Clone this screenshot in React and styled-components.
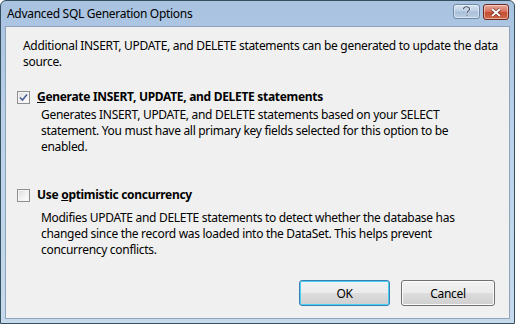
import React from 'react';
import styled, { createGlobalStyle } from 'styled-components';

const GlobalStyle = createGlobalStyle`
  html, body {
    margin: 0;
    padding: 0;
    background: #ffffff;
  }
  body {
    font-family: "Noto Sans", "Open Sans", sans-serif;
    letter-spacing: -0.3px;
  }
`;

const Window = styled.div`
  width: 515px;
  height: 324px;
  box-sizing: border-box;
  display: flex;
  flex-direction: column;
  border: 1px solid #34505f;
  border-radius: 6px 6px 0 0;
  background: linear-gradient(180deg, #a8c2e0 0%, #bcd2ea 40%, #c6d9ec 100%);
  overflow: hidden;
`;

const TitleBar = styled.div`
  height: 25px;
  flex: none;
  display: flex;
  align-items: center;
  padding: 0 5px 0 6px;
`;

const Title = styled.span`
  font-size: 12px;
  color: #000;
`;

const TitleButtons = styled.div`
  margin-left: auto;
  display: flex;
  align-items: flex-start;
  gap: 3px;
  align-self: flex-start;
  padding-top: 3px;
`;

const CaptionButton = styled.div`
  width: ${(p) => (p.$close ? 26 : 27)}px;
  height: ${(p) => (p.$close ? 16 : 15)}px;
  box-sizing: border-box;
  border: 1px solid ${(p) => (p.$close ? '#6d2a1c' : '#6f89a6')};
  border-radius: 3px;
  display: flex;
  align-items: center;
  justify-content: center;
  background: ${(p) =>
    p.$close
      ? 'linear-gradient(180deg, #e9a99c 0%, #d8735e 45%, #c44c2f 55%, #d1694c 100%)'
      : 'linear-gradient(180deg, #d8e5f2 0%, #bccfe4 45%, #a9c0da 55%, #bdd0e4 100%)'};
  box-shadow: inset 0 0 0 1px rgba(255, 255, 255, 0.45);
`;

const Client = styled.div`
  flex: 1;
  margin: 0 4px 4px;
  border: 1px solid #8ea4bb;
  background: #f0f0f0;
  display: flex;
  flex-direction: column;
  padding: 11px 10px 12px 11px;
  font-size: 12px;
  line-height: 16px;
  color: #000;
`;

const Intro = styled.p`
  margin: 0 0 0 6px;
`;

const Option = styled.div`
  margin-top: ${(p) => p.$gap}px;
  display: flex;
  flex-direction: column;
`;

const CheckRow = styled.label`
  display: flex;
  align-items: center;
  gap: 7px;
  font-weight: 700;
`;

const Box = styled.span`
  width: 13px;
  height: 13px;
  box-sizing: border-box;
  border: 1px solid #8e8f8f;
  background: linear-gradient(135deg, #dcdcdc 0%, #f5f5f5 60%, #ffffff 100%);
  box-shadow: inset 0 0 0 1px #f4f4f4;
  display: flex;
  align-items: center;
  justify-content: center;
`;

const Description = styled.p`
  margin: ${(p) => p.$gap}px 0 0 24px;
  max-width: 443px;
`;

const ButtonRow = styled.div`
  margin-top: auto;
  display: flex;
  justify-content: flex-end;
  gap: 11px;
  padding-right: 4px;
`;

const Button = styled.button`
  width: ${(p) => (p.$wide ? 94 : 91)}px;
  height: 26px;
  font-family: inherit;
  letter-spacing: inherit;
  font-size: 12px;
  color: #000;
  border-radius: 3px;
  border: 1px solid ${(p) => (p.$default ? '#3c7fb1' : '#707070')};
  background: linear-gradient(180deg, #f2f2f2 0%, #ebebeb 48%, #dddddd 52%, #cfcfcf 100%);
  box-shadow: inset 0 0 0 1px ${(p) => (p.$default ? '#48d1f5' : '#fbfbfb')};
  padding: 0;
`;

const Key = styled.span`
  text-decoration: underline;
`;

const CheckMark = () => (
  <svg width="9" height="9" viewBox="0 0 9 9">
    <path d="M1 4.5 L3.5 7 L8 1.5" fill="none" stroke="#4a5f97" strokeWidth="1.6" />
  </svg>
);

const Checkbox = ({ checked }) => <Box>{checked && <CheckMark />}</Box>;

const App = () => (
  <>
    <GlobalStyle />
    <Window>
      <TitleBar>
        <Title>Advanced SQL Generation Options</Title>
        <TitleButtons>
          <CaptionButton>
            <svg width="9" height="11" viewBox="0 0 9 11">
              <path
                d="M1.5 3.2 C1.5 1.4 3 0.8 4.5 0.8 C6.3 0.8 7.5 1.8 7.5 3.2 C7.5 5 5 5 5 7 M5 8.6 L5 10"
                fill="none"
                stroke="#fff"
                strokeWidth="2"
              />
              <path
                d="M1.5 3.2 C1.5 1.4 3 0.8 4.5 0.8 C6.3 0.8 7.5 1.8 7.5 3.2 C7.5 5 5 5 5 7 M5 8.6 L5 10"
                fill="none"
                stroke="#3d4f66"
                strokeWidth="1.1"
              />
            </svg>
          </CaptionButton>
          <CaptionButton $close>
            <svg width="12" height="9" viewBox="0 0 12 9">
              <path d="M2 1 L10 8 M10 1 L2 8" stroke="#5a1a10" strokeWidth="3" />
              <path d="M2 1 L10 8 M10 1 L2 8" stroke="#ffffff" strokeWidth="2" />
            </svg>
          </CaptionButton>
        </TitleButtons>
      </TitleBar>
      <Client>
        <Intro>
          Additional INSERT, UPDATE, and DELETE statements can be generated to update the data
          source.
        </Intro>
        <Option $gap={19}>
          <CheckRow>
            <Checkbox checked />
            <span>
              <Key>G</Key>enerate INSERT, UPDATE, and DELETE statements
            </span>
          </CheckRow>
          <Description $gap={2}>
            Generates INSERT, UPDATE, and DELETE statements based on your SELECT statement. You
            must have all primary key fields selected for this option to be enabled.
          </Description>
        </Option>
        <Option $gap={32}>
          <CheckRow>
            <Checkbox />
            <span>
              Use <Key>o</Key>ptimistic concurrency
            </span>
          </CheckRow>
          <Description $gap={7}>
            Modifies UPDATE and DELETE statements to detect whether the database has changed since
            the record was loaded into the DataSet. This helps prevent concurrency conflicts.
          </Description>
        </Option>
        <ButtonRow>
          <Button $default>OK</Button>
          <Button $wide>Cancel</Button>
        </ButtonRow>
      </Client>
    </Window>
  </>
);

export default App;
